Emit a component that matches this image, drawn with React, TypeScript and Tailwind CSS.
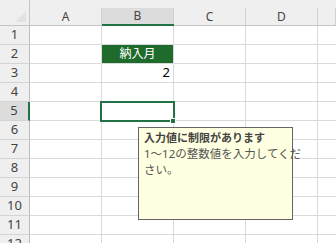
import React from "react";

const COLS = ["A", "B", "C", "D", ""];
const ROWS = [1, 2, 3, 4, 5, 6, 7, 8, 9, 10, 11, 12];

const font = { fontFamily: '"Noto Sans", "Noto Sans CJK JP", sans-serif' };

const ColHeader: React.FC<{ label: string; active?: boolean }> = ({ label, active }) => (
	<div
		className={
			active
				? "bg-[#efefef] pt-2 border-b-2 border-[#217346]"
				: "bg-[#efefef] pt-2 border-b border-[#c4c4c4]"
		}
	>
		<div
			className={
				active
					? "h-full bg-[#dcdcdc] border-r border-[#d0d0d0] flex items-center justify-center text-[12px] text-[#444]"
					: "h-full border-r border-[#d0d0d0] flex items-center justify-center text-[12px] text-[#444]"
			}
		>
			{label}
		</div>
	</div>
);

const App: React.FC = () => {
	return (
		<div className="relative w-[336px] h-[243px] overflow-hidden bg-white" style={font}>
			<div className="grid grid-cols-[30px_72px_72px_72px_72px_1fr] grid-rows-[26px_repeat(12,19px)]">
				{/* corner */}
				<div className="relative bg-[#efefef] border-b border-r border-[#c4c4c4]">
					<svg className="absolute right-[3px] bottom-[3px]" width="11" height="11" viewBox="0 0 11 11">
						<polygon points="11,0 11,11 0,11" fill="#e2e2e2" />
					</svg>
				</div>
				{COLS.map((c) => (
					<ColHeader key={c || "E"} label={c} active={c === "B"} />
				))}

				{ROWS.map((r) => (
					<React.Fragment key={r}>
						<div
							className={
								r === 5
									? "bg-[#dcdcdc] border-r-2 border-r-[#217346] border-b border-b-[#d4d4d4] flex items-center justify-center text-[13px] text-[#444]"
									: "bg-[#efefef] border-r border-r-[#bdbdbd] border-b border-b-[#d4d4d4] flex items-center justify-center text-[13px] text-[#444]"
							}
						>
							{r}
						</div>
						{/* A */}
						<div className="border-r border-b border-[#dadada]" />
						{/* B */}
						{r === 2 ? (
							<div className="bg-[#1e6b2c] border-r border-b border-[#dadada] flex items-center justify-center text-[12px] text-white">
								納入月
							</div>
						) : r === 3 ? (
							<div className="border-r border-b border-[#dadada] flex items-center justify-end pr-[3px] text-[13px] text-black">
								2
							</div>
						) : (
							<div className="border-r border-b border-[#dadada]" />
						)}
						<div className="border-r border-b border-[#dadada]" />
						<div className="border-r border-b border-[#dadada]" />
						<div className="border-b border-[#dadada]" />
					</React.Fragment>
				))}
			</div>

			{/* active cell B5 */}
			<div className="absolute left-[100px] top-[101px] w-[75px] h-[21px] border-2 border-[#217346]" />
			<div className="absolute left-[170px] top-[118px] w-[6px] h-[6px] bg-[#217346] border border-white" />

			{/* input message tooltip */}
			<div className="absolute left-[138px] top-[127px] w-[155px] h-[93px] border-[1.5px] border-[#646464] bg-[#ffffe1] px-[5px] pt-[2px] leading-[16px] whitespace-nowrap">
				<div className="font-bold text-[11px] text-[#444]">入力値に制限があります</div>
				<div className="text-[11.5px] text-[#555]">
					1～12の整数値を入力してくだ
					<br />
					さい。
				</div>
			</div>
		</div>
	);
};

export default App;
